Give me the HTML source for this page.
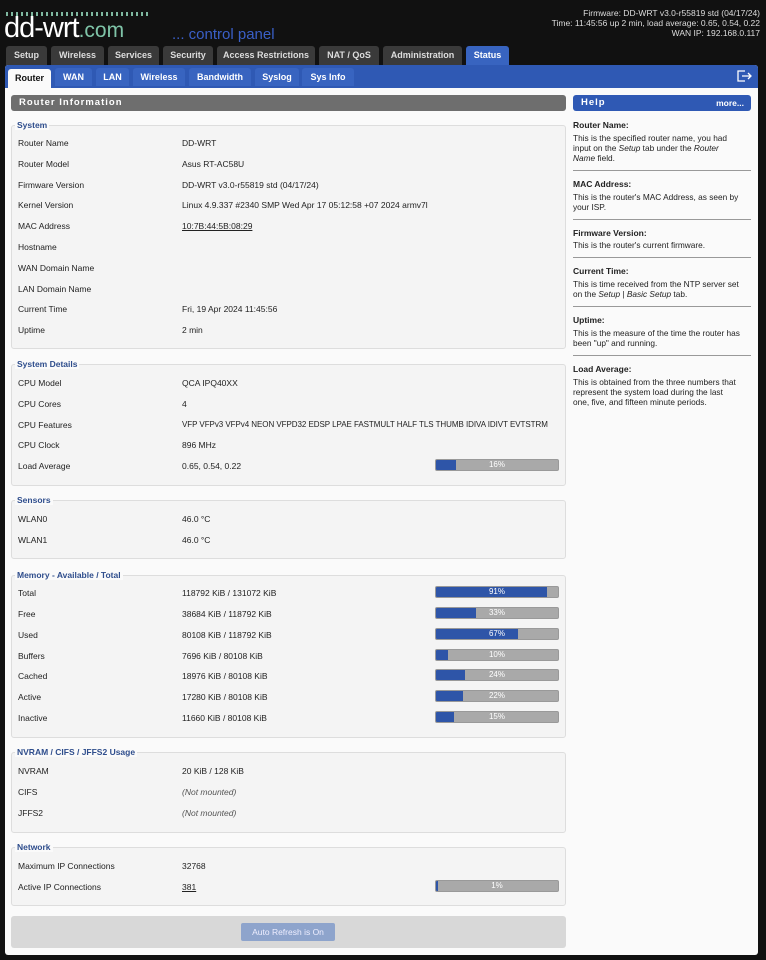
<!DOCTYPE html>
<html><head><meta charset="utf-8"><style>
*{margin:0;padding:0;box-sizing:border-box}
body{width:766px;height:960px;background:#111;font-family:"Liberation Sans",sans-serif;font-size:8.5px;color:#222;position:relative;overflow:hidden}
.a{position:absolute}
.tab{position:absolute;top:46px;height:19px;background:#3a3a3a;color:#ddd;font-weight:bold;font-size:9px;text-align:center;line-height:19px;border-radius:3px 3px 0 0}
.st{position:absolute;top:68px;height:18px;background:#3864c0;color:#fff;font-weight:bold;font-size:9px;text-align:center;line-height:18px;border-radius:3px 3px 0 0}
.fs{position:absolute;left:11px;width:555px;border:1px solid #ddd;border-radius:3px;background:#f4f4f4}
.lg{position:absolute;left:15px;color:#2e4d8c;font-weight:bold;font-size:8.5px;background:#fafafa;padding:0 2px;line-height:10px}
.l{position:absolute;left:18px;line-height:12px;white-space:nowrap}
.v{position:absolute;left:182px;line-height:12px;white-space:nowrap}
.bar{position:absolute;left:435px;width:124px;height:12px;background:#a9a9a9;border:1px solid #999;border-radius:2px;overflow:hidden;color:#fff;font-size:8px;text-align:center;line-height:10px}
.bar i{position:absolute;left:0;top:0;bottom:0;background:#2e55a8}
.bar span{position:relative}
.hh{position:absolute;left:573px;font-weight:bold;font-size:8.5px;line-height:10px}
.ht{position:absolute;left:573px;width:168px;line-height:10px;font-size:8.3px}
.hr{position:absolute;left:573px;width:178px;border-top:1px solid #999}
</style></head><body>
<div class="a" style="left:6px;top:12px;width:145px;height:4px;background:repeating-linear-gradient(90deg,#7fb8a0 0 2px,transparent 2px 5px)"></div>
<div class="a" style="left:4px;top:11px;font-size:29px;color:#fff;letter-spacing:-1px;font-weight:300;line-height:34px">dd-wrt<span style="color:#7fc4a8;font-size:21px;letter-spacing:0">.com</span></div>
<div class="a" style="left:172px;top:26px;font-size:15px;color:#3a5fc7;line-height:18px">... control panel</div>
<div class="a" style="right:6px;top:8px;color:#ddd;font-size:8.5px;text-align:right;line-height:10px">Firmware: DD-WRT v3.0-r55819 std (04/17/24)<br>Time: 11:45:56 up 2 min, load average: 0.65, 0.54, 0.22<br>WAN IP: 192.168.0.117</div>
<div class="tab" style="left:6px;width:41px">Setup</div>
<div class="tab" style="left:51px;width:53px">Wireless</div>
<div class="tab" style="left:108px;width:51px">Services</div>
<div class="tab" style="left:163px;width:50px">Security</div>
<div class="tab" style="left:217px;width:98px">Access Restrictions</div>
<div class="tab" style="left:319px;width:60px">NAT / QoS</div>
<div class="tab" style="left:383px;width:79px">Administration</div>
<div class="tab" style="left:466px;width:43px;background:#3864c0;color:#fff">Status</div>
<div class="a" style="left:5px;top:65px;width:753px;height:890px;background:#fafafa;border-radius:3px"></div>
<div class="a" style="left:5px;top:65px;width:753px;height:23px;background:#2f59b4;border-radius:3px 3px 0 0"></div>
<div class="st" style="left:8px;top:69px;width:43px;background:#fafafa;color:#111;height:19px">Router</div>
<div class="st" style="left:55px;width:37px">WAN</div>
<div class="st" style="left:96px;width:33px">LAN</div>
<div class="st" style="left:133px;width:52px">Wireless</div>
<div class="st" style="left:189px;width:62px">Bandwidth</div>
<div class="st" style="left:255px;width:44px">Syslog</div>
<div class="st" style="left:302px;width:52px">Sys Info</div>
<svg class="a" style="left:736px;top:69px" width="16" height="14" viewBox="0 0 16 14" fill="none" stroke="#fff" stroke-width="1.3"><path d="M9 2H2v10h7M6 7h9M12 4l3 3-3 3"/></svg>
<div class="a" style="left:11px;top:95px;width:555px;height:16px;background:#6e6e6e;border-radius:3px;color:#fff;font-weight:bold;font-size:9.5px;letter-spacing:1px;line-height:16px;padding-left:8px">Router Information</div>
<div class="a" style="left:573px;top:95px;width:178px;height:16px;background:#2f59b4;border-radius:3px;color:#fff;font-weight:bold;font-size:9.5px;letter-spacing:1px;line-height:16px;padding-left:8px">Help<span style="position:absolute;right:7px;letter-spacing:0;font-size:8.5px">more...</span></div>

<div class="fs" style="top:125px;height:224px"></div><div class="lg" style="top:120px">System</div>
<div class="l" style="top:137px">Router Name</div><div class="v" style="top:137px">DD-WRT</div>
<div class="l" style="top:158px">Router Model</div><div class="v" style="top:158px">Asus RT-AC58U</div>
<div class="l" style="top:179px">Firmware Version</div><div class="v" style="top:179px">DD-WRT v3.0-r55819 std (04/17/24)</div>
<div class="l" style="top:199px">Kernel Version</div><div class="v" style="top:199px">Linux 4.9.337 #2340 SMP Wed Apr 17 05:12:58 +07 2024 armv7l</div>
<div class="l" style="top:220px">MAC Address</div><div class="v" style="top:220px;text-decoration:underline">10:7B:44:5B:08:29</div>
<div class="l" style="top:241px">Hostname</div>
<div class="l" style="top:262px">WAN Domain Name</div>
<div class="l" style="top:283px">LAN Domain Name</div>
<div class="l" style="top:303px">Current Time</div><div class="v" style="top:303px">Fri, 19 Apr 2024 11:45:56</div>
<div class="l" style="top:324px">Uptime</div><div class="v" style="top:324px">2 min</div>

<div class="fs" style="top:364px;height:122px"></div><div class="lg" style="top:359px">System Details</div>
<div class="l" style="top:377px">CPU Model</div><div class="v" style="top:377px">QCA IPQ40XX</div>
<div class="l" style="top:398px">CPU Cores</div><div class="v" style="top:398px">4</div>
<div class="l" style="top:419px">CPU Features</div><div class="v" style="top:419px;font-size:8px;letter-spacing:-0.05px">VFP VFPv3 VFPv4 NEON VFPD32 EDSP LPAE FASTMULT HALF TLS THUMB IDIVA IDIVT EVTSTRM</div>
<div class="l" style="top:439px">CPU Clock</div><div class="v" style="top:439px">896 MHz</div>
<div class="l" style="top:460px">Load Average</div><div class="v" style="top:460px">0.65, 0.54, 0.22</div>
<div class="bar" style="top:459px"><i style="width:16%"></i><span>16%</span></div>

<div class="fs" style="top:500px;height:59px"></div><div class="lg" style="top:495px">Sensors</div>
<div class="l" style="top:513px">WLAN0</div><div class="v" style="top:513px">46.0 °C</div>
<div class="l" style="top:534px">WLAN1</div><div class="v" style="top:534px">46.0 °C</div>

<div class="fs" style="top:575px;height:163px"></div><div class="lg" style="top:570px">Memory - Available / Total</div>
<div class="l" style="top:587px">Total</div><div class="v" style="top:587px">118792 KiB / 131072 KiB</div><div class="bar" style="top:586px"><i style="width:91%"></i><span>91%</span></div>
<div class="l" style="top:608px">Free</div><div class="v" style="top:608px">38684 KiB / 118792 KiB</div><div class="bar" style="top:607px"><i style="width:33%"></i><span>33%</span></div>
<div class="l" style="top:629px">Used</div><div class="v" style="top:629px">80108 KiB / 118792 KiB</div><div class="bar" style="top:628px"><i style="width:67%"></i><span>67%</span></div>
<div class="l" style="top:650px">Buffers</div><div class="v" style="top:650px">7696 KiB / 80108 KiB</div><div class="bar" style="top:649px"><i style="width:10%"></i><span>10%</span></div>
<div class="l" style="top:670px">Cached</div><div class="v" style="top:670px">18976 KiB / 80108 KiB</div><div class="bar" style="top:669px"><i style="width:24%"></i><span>24%</span></div>
<div class="l" style="top:691px">Active</div><div class="v" style="top:691px">17280 KiB / 80108 KiB</div><div class="bar" style="top:690px"><i style="width:22%"></i><span>22%</span></div>
<div class="l" style="top:712px">Inactive</div><div class="v" style="top:712px">11660 KiB / 80108 KiB</div><div class="bar" style="top:711px"><i style="width:15%"></i><span>15%</span></div>

<div class="fs" style="top:752px;height:81px"></div><div class="lg" style="top:747px">NVRAM / CIFS / JFFS2 Usage</div>
<div class="l" style="top:765px">NVRAM</div><div class="v" style="top:765px">20 KiB / 128 KiB</div>
<div class="l" style="top:786px">CIFS</div><div class="v" style="top:786px;font-style:italic;color:#555">(Not mounted)</div>
<div class="l" style="top:807px">JFFS2</div><div class="v" style="top:807px;font-style:italic;color:#555">(Not mounted)</div>

<div class="fs" style="top:847px;height:59px"></div><div class="lg" style="top:842px">Network</div>
<div class="l" style="top:860px">Maximum IP Connections</div><div class="v" style="top:860px">32768</div>
<div class="l" style="top:881px">Active IP Connections</div><div class="v" style="top:881px;text-decoration:underline">381</div>
<div class="bar" style="top:880px"><i style="width:2px"></i><span>1%</span></div>

<div class="a" style="left:11px;top:916px;width:555px;height:32px;background:#d8d8d8;border-radius:3px"></div>
<div class="a" style="left:241px;top:923px;width:94px;height:18px;background:#8ea4cc;border-radius:2px;color:#eef;font-size:8.5px;text-align:center;line-height:18px">Auto Refresh is On</div>

<div class="hh" style="top:120px">Router Name:</div>
<div class="ht" style="top:133px">This is the specified router name, you had input on the <i>Setup</i> tab under the <i>Router Name</i> field.</div>
<div class="hr" style="top:170px"></div>
<div class="hh" style="top:179px">MAC Address:</div>
<div class="ht" style="top:192px">This is the router's MAC Address, as seen by your ISP.</div>
<div class="hr" style="top:219px"></div>
<div class="hh" style="top:228px">Firmware Version:</div>
<div class="ht" style="top:240px">This is the router's current firmware.</div>
<div class="hr" style="top:257px"></div>
<div class="hh" style="top:266px">Current Time:</div>
<div class="ht" style="top:279px">This is time received from the NTP server set on the <i>Setup</i> | <i>Basic Setup</i> tab.</div>
<div class="hr" style="top:306px"></div>
<div class="hh" style="top:315px">Uptime:</div>
<div class="ht" style="top:328px">This is the measure of the time the router has been "up" and running.</div>
<div class="hr" style="top:355px"></div>
<div class="hh" style="top:364px">Load Average:</div>
<div class="ht" style="top:377px">This is obtained from the three numbers that represent the system load during the last one, five, and fifteen minute periods.</div>
</body></html>
